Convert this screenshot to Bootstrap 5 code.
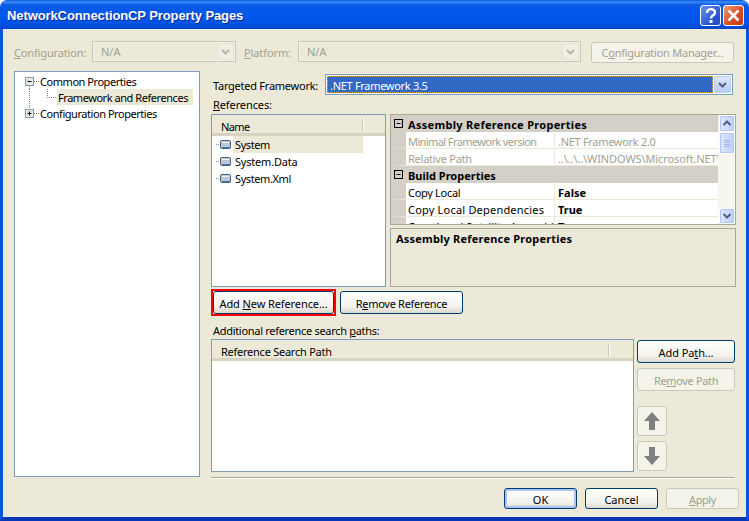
<!DOCTYPE html>
<html lang="en">
<head>
<meta charset="utf-8">
<title>NetworkConnectionCP Property Pages</title>
<link href="https://cdn.jsdelivr.net/npm/bootstrap@5.3.0/dist/css/bootstrap.min.css" rel="stylesheet">
<style>
html,body{margin:0;height:521px;overflow:hidden;background:#fff}
body{font-family:"Noto Sans",sans-serif;font-size:11px;color:#000;line-height:14px;white-space:nowrap}
.ls1{letter-spacing:-.1px}.ls15{letter-spacing:-.15px}.ls2{letter-spacing:-.2px}.ls25{letter-spacing:-.25px}.ls3{letter-spacing:-.3px}.ls35{letter-spacing:-.35px}.ls4{letter-spacing:-.4px}.ls45{letter-spacing:-.45px}.ls6{letter-spacing:-.6px}.lsp2{letter-spacing:.2px}.lsp3{letter-spacing:.3px}
.xpwin{width:749px;height:521px;border-radius:7px 7px 0 0;overflow:hidden}
.xptitle{height:29px;background:linear-gradient(#0a58dc 0,#3a8cf6 2px,#0a5ae6 5px,#0058ee 14px,#0055e8 23px,#0044c8 29px);color:#fff;font:700 13px/32px "Liberation Sans",sans-serif;letter-spacing:-.1px;text-shadow:1px 1px 0 #0a2a90;padding:0 5px 0 7px}
.xpcap{width:21px;height:21px;border:1px solid #fff;border-radius:3px;margin-top:5px;margin-left:2px}
.xpcap svg{display:block}
.xphelp{background:linear-gradient(135deg,#6d93ea,#2a52d0 70%,#2448c0)}
.xpclose{background:linear-gradient(135deg,#ee9a78,#d8481e 60%,#c83a14)}
.xpbody{height:492px;background:#ece9d8;border-left:3px solid #0855dd;border-right:3px solid #0855dd;border-bottom:4px solid #0836b8;box-shadow:0 1px 0 #00138c}
.xpcfg{margin:12px 0 0 11px;height:21px}
.dim{color:#a1a192}
.xpsel{background:#fff;border:1px solid #7f9db9;height:21px;padding:1px}
.xpsel.off{background:#ece9d8;border-color:#c9c7ba;box-shadow:inset 0 0 0 1px #f3f1e6;color:#a1a192}
.xpsel .val{padding-left:7px;line-height:17px}
.xparrow{width:17px;height:17px;border:1px solid #bcd0f4;border-radius:2px;background:linear-gradient(#dfe8fd,#b5cbf8)}
.xparrow svg{display:block}
.off .xparrow{background:#f0eee2;border-color:#e4e2d6}
.w-lab1{width:78px;line-height:24px}
.w-lab2{width:54px;line-height:24px}
.w-sel1{width:144px}
.w-sel2{width:283px}
.xpbtn{border:1px solid #003c74;border-radius:3px;padding:2px 0 0;font-size:11px;line-height:14px;color:#000;background:linear-gradient(#fff,#f3f2ec 70%,#dcd8cc);white-space:nowrap}
.xpbtn:disabled{opacity:1;color:#a1a192;border-color:#cac8bb;background:#f4f3ea}
.xpbtn.dflt{box-shadow:inset 0 0 0 2px #a9c4ee}
.xpcfgbtn{width:143px;height:21px;margin:1px 0 0 10px;padding-top:0}
.xpmain{margin:9px 0 0 11px;height:408px}
.xptree{width:186px;height:406px;background:#fff;border:1px solid #7f9db9;padding-top:1px}
.xpnode{height:16px;line-height:18px}
.xpnode svg{flex:none;display:block}
.xphi{background:#ece9d8;width:136px;padding-left:1px}
.xpright{width:525px;margin-left:11px}
.xptarget{margin:3px 0 0 2px;height:21px}
.w-lab3{width:112px;line-height:24px}
.w-sel3{width:408px}
.xpsel .sel{background:#316ac5;color:#fff;flex:1;line-height:19px;outline:1px dotted #e8b040;outline-offset:-1px;padding-left:3px;margin-right:1px}
.xplab{height:19px;line-height:19px;padding-left:2px}
.xpsplit{height:173px}
.xplist{background:#fff;border:1px solid #7f9db9}
.xphead{height:21px;background:#ece9d8;border-bottom:3px solid #d7d3c1;padding-left:9px;line-height:24px}
.xphead b{font-weight:400}
.xphead i{display:block;width:1px;height:14px;margin-top:3px;background:#cbc7b8;box-shadow:1px 0 0 #fff}
.xpref{height:17px;line-height:17px;padding-left:4px}
.xpref svg{flex:none;margin-right:1px}
.xpref span{display:block;width:130px;padding-left:2px}
.xpref .on{background:#ece9d8}
.xpcol2{width:346px;margin-left:4px}
.xpgrid{height:111px;border:1px solid #aca899;background:#fff;overflow:hidden}
.xpsec{height:17px;background:#d4d0c8;font-weight:700;line-height:19px}
.xpsec svg{flex:none;margin:0 5px 0 3px}
.xprow{height:17px;line-height:16px;border-left:15px solid #d4d0c8;border-bottom:1px solid #ece9d8}
.xprow div{padding-top:2px}
.xprow div:first-child{width:149px;flex:none;border-right:1px solid #ece9d8;padding-left:2px;overflow:hidden}
.xprow div:last-child{padding-left:3px;flex:1;overflow:hidden}
.xpcells{width:327px;height:109px;overflow:hidden}
.xpbar{width:17px;padding-left:1px;background:#f6f5ee;height:109px}
.xpbar div{background:linear-gradient(90deg,#dfe8fd,#bdd0fa);border:1px solid #fff;border-radius:2px;box-shadow:0 0 0 1px #b4c8f6 inset}
.xpdesc{height:59px;margin-top:3px;border:1px solid #aca899;padding:3px 5px;font-weight:700}
.xpact{height:27px;margin-top:2px}
.xpred{width:125px;height:27px;border:2px solid #f00;background:#ece9d8}
.xpred button{width:121px;height:23px;display:block}
.xprem{width:123px;height:23px;margin:2px 0 0 4px}
.xplab2{height:23px;padding:8px 0 0 2px}
.xppaths{height:133px}
.xplist2{width:423px;background:#fff;border:1px solid #7f9db9}
.xpside{width:98px;margin-left:3px;padding-top:1px}
.xpside button{display:block;height:23px;width:98px}
.xpside .xpsq{width:30px;height:30px;background:#f4f3ea;border:1px solid #cac8bb;border-radius:3px;display:flex;align-items:center;justify-content:center}
.mt5{margin-top:5px}.mt15{margin-top:15px}
.xpsep{height:2px;width:524px;margin-top:5px;background:#aca899;border-bottom:1px solid #fff}
.xpfoot{margin:9px 7px 0 0}
.xpfoot button{width:73px;height:21px;margin-left:8px}
</style>
</head>
<body>
<div class="xpwin d-flex flex-column">
  <div class="xptitle d-flex justify-content-between flex-none">
    <div>NetworkConnectionCP Property Pages</div>
    <div class="d-flex">
      <div class="xpcap xphelp"><svg width="19" height="19" viewBox="0 0 19 19"><path d="M6 7c0-5 8-5 8-.6 0 3-4 2.800-4 6" fill="none" stroke="#fff" stroke-width="2.400"/><rect x="8.500" y="14" width="3" height="3" fill="#fff"/></svg></div>
      <div class="xpcap xpclose"><svg width="19" height="19" viewBox="0 0 19 19"><path d="M4.500 4.500l10 10M14.500 4.500l-10 10" fill="none" stroke="#fff" stroke-width="2.600"/></svg></div>
    </div>
  </div>
  <div class="xpbody">
    <div class="xpcfg d-flex">
      <div class="w-lab1 dim ls15"><u>C</u>onfiguration:</div>
      <div class="xpsel off w-sel1 d-flex justify-content-between"><div class="val">N/A</div><div class="xparrow"><svg width="15" height="15" viewBox="0 0 15 15"><path d="M4 6l3.500 3.500L11 6" fill="none" stroke="#b8b6aa" stroke-width="2"/></svg></div></div>
      <div class="w-lab2 dim ms-2 ls1"><u>P</u>latform:</div>
      <div class="xpsel off w-sel2 d-flex justify-content-between"><div class="val">N/A</div><div class="xparrow"><svg width="15" height="15" viewBox="0 0 15 15"><path d="M4 6l3.500 3.500L11 6" fill="none" stroke="#b8b6aa" stroke-width="2"/></svg></div></div>
      <button class="btn xpbtn xpcfgbtn ls25" disabled>C<u>o</u>nfiguration Manager...</button>
    </div>
    <div class="xpmain d-flex">
      <div class="xptree ls45">
        <div class="xpnode d-flex"><svg width="25" height="16" viewBox="0 0 25 16"><path d="M14.500 13v3M19 8.500h5" stroke="#8a8a80" stroke-dasharray="1 1"/><rect x="10.500" y="4.500" width="8" height="8" fill="#e8e8e0" stroke="#7f9db9"/><path d="M12.500 8.500h4" stroke="#000"/></svg><div>Common Properties</div></div>
        <div class="xpnode d-flex"><svg width="42" height="16" viewBox="0 0 42 16"><path d="M14.500 0v16M32.500 0v8.500H42" fill="none" stroke="#8a8a80" stroke-dasharray="1 1"/></svg><div class="xphi">Framework and References</div></div>
        <div class="xpnode d-flex"><svg width="25" height="16" viewBox="0 0 25 16"><path d="M14.500 0v4M19 8.500h5" stroke="#8a8a80" stroke-dasharray="1 1"/><rect x="10.500" y="4.500" width="8" height="8" fill="#e8e8e0" stroke="#7f9db9"/><path d="M12.500 8.500h4M14.500 6.500v4" stroke="#000"/></svg><div>Configuration Properties</div></div>
      </div>
      <div class="xpright">
        <div class="xptarget d-flex">
          <div class="w-lab3 ls25">Tar<u>g</u>eted Framework:</div>
          <div class="xpsel w-sel3 d-flex"><div class="sel ls3">.NET Framework 3.5</div><div class="xparrow"><svg width="15" height="15" viewBox="0 0 15 15"><path d="M4 6l3.500 3.500L11 6" fill="none" stroke="#4d6185" stroke-width="2"/></svg></div></div>
        </div>
        <div class="xplab ls1"><u>R</u>eferences:</div>
        <div class="xpsplit d-flex">
          <div class="xplist flex-fill">
            <div class="xphead d-flex justify-content-between"><b class="ls6">Name</b><i style="margin-right:22px"></i></div>
            <div class="xpref d-flex"><svg width="16" height="17" viewBox="0 0 16 17"><path d="M0 8.500h4" stroke="#889" stroke-dasharray="1 1"/><rect x="4.500" y="4.500" width="10" height="8" rx="1" fill="#b8c8d8" stroke="#4a6078"/><path d="M6 6.500h7" stroke="#eef2f6"/><path d="M6 11.500h8" stroke="#3878b0"/></svg><span class="on ls4">System</span></div>
            <div class="xpref d-flex"><svg width="16" height="17" viewBox="0 0 16 17"><path d="M0 8.500h4" stroke="#889" stroke-dasharray="1 1"/><rect x="4.500" y="4.500" width="10" height="8" rx="1" fill="#b8c8d8" stroke="#4a6078"/><path d="M6 6.500h7" stroke="#eef2f6"/><path d="M6 11.500h8" stroke="#3878b0"/></svg><span class="ls2">System.Data</span></div>
            <div class="xpref d-flex"><svg width="16" height="17" viewBox="0 0 16 17"><path d="M0 8.500h4" stroke="#889" stroke-dasharray="1 1"/><rect x="4.500" y="4.500" width="10" height="8" rx="1" fill="#b8c8d8" stroke="#4a6078"/><path d="M6 6.500h7" stroke="#eef2f6"/><path d="M6 11.500h8" stroke="#3878b0"/></svg><span class="ls4">System.Xml</span></div>
          </div>
          <div class="xpcol2 flex-none">
            <div class="xpgrid d-flex">
              <div class="xpcells">
                <div class="xpsec d-flex lsp3"><svg width="9" height="17" viewBox="0 0 9 17"><rect x=".5" y="4.500" width="8" height="8" fill="none" stroke="#000"/><path d="M2.500 8.500h4" stroke="#000"/></svg>Assembly Reference Properties</div>
                <div class="xprow d-flex dim"><div class="ls6">Minimal Framework version</div><div class="ls3">.NET Framework 2.0</div></div>
                <div class="xprow d-flex dim"><div class="ls25">Relative Path</div><div class="ls1">..\..\..\WINDOWS\Microsoft.NET\Framework</div></div>
                <div class="xpsec d-flex"><svg width="9" height="17" viewBox="0 0 9 17"><rect x=".5" y="4.500" width="8" height="8" fill="none" stroke="#000"/><path d="M2.500 8.500h4" stroke="#000"/></svg>Build Properties</div>
                <div class="xprow d-flex"><div class="ls3">Copy Local</div><div class="fw-bold">False</div></div>
                <div class="xprow d-flex"><div class="lsp2">Copy Local Dependencies</div><div class="fw-bold">True</div></div>
                <div class="xprow d-flex"><div>Copy Local Satellite Assemblies</div><div class="fw-bold">True</div></div>
              </div>
              <div class="xpbar d-flex flex-column">
                <div style="height:17px"><svg class="d-block" width="14" height="15" viewBox="0 0 14 15"><path d="M3.500 9l3.500-3.500L10.500 9" fill="none" stroke="#4d6185" stroke-width="2"/></svg></div>
                <div style="height:22px"><svg class="d-block" width="14" height="20" viewBox="0 0 14 20"><path d="M4 7.500h6M4 9.500h6M4 11.500h6M4 13.500h6" stroke="#9db5e8"/></svg></div>
                <div class="mt-auto" style="height:16px"><svg class="d-block" width="14" height="14" viewBox="0 0 14 14"><path d="M3.500 5l3.500 3.500L10.500 5" fill="none" stroke="#4d6185" stroke-width="2"/></svg></div>
              </div>
            </div>
            <div class="xpdesc lsp2">Assembly Reference Properties</div>
          </div>
        </div>
        <div class="xpact d-flex">
          <div class="xpred"><button class="btn xpbtn ls1">Add <u>N</u>ew Reference...</button></div>
          <button class="btn xpbtn xprem ls3">R<u>e</u>move Reference</button>
        </div>
        <div class="xplab2 ls3">Additional reference search <u>p</u>aths:</div>
        <div class="xppaths d-flex">
          <div class="xplist2">
            <div class="xphead d-flex justify-content-between"><b class="ls25">Reference Search Path</b><i style="margin-right:24px"></i></div>
          </div>
          <div class="xpside">
            <button class="btn xpbtn ls1">Add Pa<u>t</u>h...</button>
            <button class="btn xpbtn mt5 ls35" disabled>Re<u>m</u>ove Path</button>
            <div class="xpsq mt15"><svg width="20" height="22" viewBox="0 0 20 22"><path d="M10 2l8 9h-5v9H7v-9H2z" fill="#808080"/></svg></div>
            <div class="xpsq mt5"><svg width="20" height="22" viewBox="0 0 20 22"><path d="M10 20l8-9h-5V2H7v9H2z" fill="#808080"/></svg></div>
          </div>
        </div>
        <div class="xpsep"></div>
      </div>
    </div>
    <div class="xpfoot d-flex justify-content-end">
      <button class="btn xpbtn dflt">OK</button>
      <button class="btn xpbtn">Cancel</button>
      <button class="btn xpbtn ls4" disabled><u>A</u>pply</button>
    </div>
  </div>
</div>
</body>
</html>
